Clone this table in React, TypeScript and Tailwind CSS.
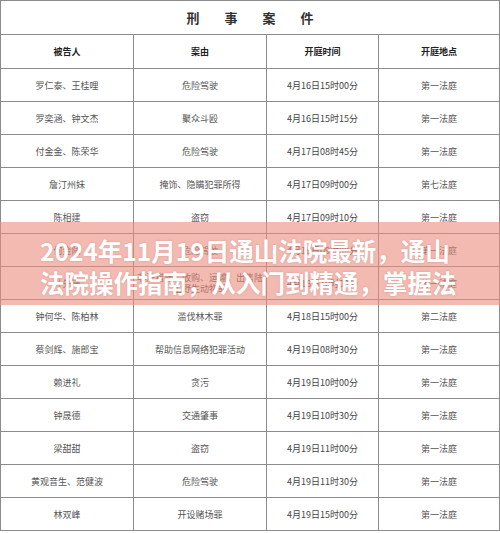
const cjk = "font-['Noto_Sans_CJK_SC','Noto_Sans',sans-serif]";

type Row = { name: string; cause: string; time: string; room: string };

const rows: Row[] = [
  { name: "罗仁泰、王桂哩", cause: "危险驾驶", time: "4月16日15时00分", room: "第一法庭" },
  { name: "罗奕涵、钟文杰", cause: "聚众斗殴", time: "4月16日15时15分", room: "第一法庭" },
  { name: "付金金、陈荣华", cause: "危险驾驶", time: "4月17日08时45分", room: "第一法庭" },
  { name: "詹汀州妹", cause: "掩饰、隐瞒犯罪所得", time: "4月17日09时00分", room: "第七法庭" },
  { name: "陈相建", cause: "盗窃", time: "4月17日09时10分", room: "第一法庭" },
  { name: "何金陆", cause: "危险驾驶", time: "4月18日09时00分", room: "第一法庭" },
  { name: "叶先锋", cause: "非法猎捕、收购、运输、出售陆生野生动物罪", time: "4月18日10时00分", room: "第一法庭" },
  { name: "钟何华、陈柏林", cause: "滥伐林木罪", time: "4月18日15时00分", room: "第二法庭" },
  { name: "蔡剑辉、施郎宝", cause: "帮助信息网络犯罪活动", time: "4月19日08时30分", room: "第一法庭" },
  { name: "赖进礼", cause: "贪污", time: "4月19日10时00分", room: "第一法庭" },
  { name: "钟晟德", cause: "交通肇事", time: "4月19日10时30分", room: "第一法庭" },
  { name: "梁甜甜", cause: "盗窃", time: "4月19日11时00分", room: "第一法庭" },
  { name: "黄观音生、范健波", cause: "危险驾驶", time: "4月19日11时30分", room: "第一法庭" },
  { name: "林双峰", cause: "开设赌场罪", time: "4月19日15时00分", room: "第一法庭" },
];

const cell = "flex items-center justify-center border-r border-b border-[#8c8c8c] text-center";

export default function App() {
  return (
    <div className={`relative h-[533px] w-[500px] overflow-hidden bg-white ${cjk}`}>
      <div className="grid grid-cols-[133px_133px_112px_121px] border-t border-l border-[#8c8c8c]">
        <div className={`${cell} col-span-4 h-[34px] gap-[25px] text-[13px] font-bold text-[#333]`}>
          <span>刑</span>
          <span>事</span>
          <span>案</span>
          <span>件</span>
        </div>
        {["被告人", "案由", "开庭时间", "开庭地点"].map((h) => (
          <div key={h} className={`${cell} h-[34px] text-[9px] font-bold text-[#222]`}>
            {h}
          </div>
        ))}
        {rows.map((r) => (
          <div key={r.name} className="contents text-[9px] leading-[11px] text-[#555]">
            <div className={`${cell} h-[33px]`}>{r.name}</div>
            <div className={`${cell} h-[33px] px-[3px]`}>{r.cause}</div>
            <div className={`${cell} h-[33px] text-[#444]`}>{r.time}</div>
            <div className={`${cell} h-[33px]`}>{r.room}</div>
          </div>
        ))}
      </div>

      <div className="absolute top-[222px] left-0 h-[83px] w-full bg-[rgba(233,140,125,0.6)] px-[40px] pt-[13px]">
        <h1 className="h-[64px] overflow-hidden text-[24.5px] leading-[32px] font-bold text-white [text-shadow:0_0_2px_rgba(150,60,50,0.25)]">
          2024年11月19日通山法院最新，通山法院操作指南，从入门到精通，掌握法律事务办理技巧
        </h1>
      </div>
    </div>
  );
}
